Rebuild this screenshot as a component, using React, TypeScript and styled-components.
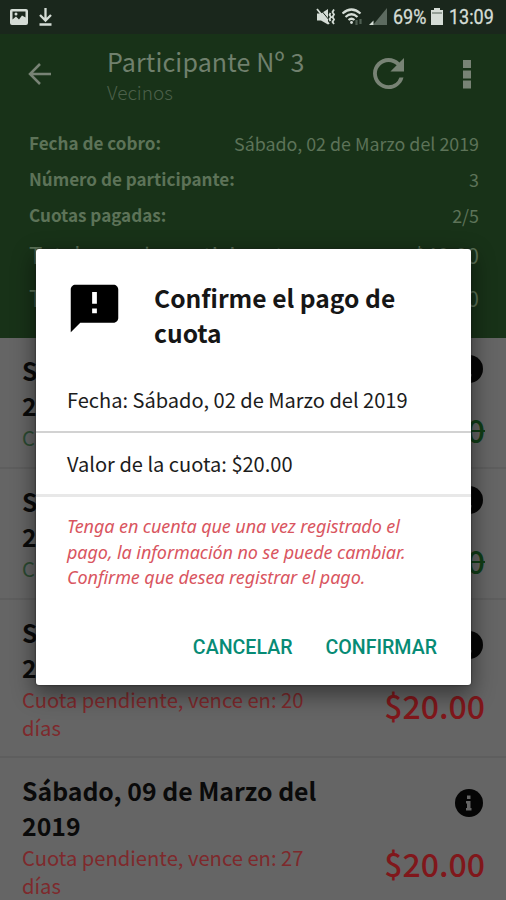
import React from "react";
import styled, { createGlobalStyle } from "styled-components";

const Global = createGlobalStyle`
  *{box-sizing:border-box}
  html,body{margin:0;padding:0;background:#656565}
  body{width:506px;height:900px;overflow:hidden;font-family:"Noto Sans CJK SC","Noto Sans",sans-serif}
`;

const Screen = styled.div`
  position: relative;
  width: 506px;
  height: 900px;
  overflow: hidden;
  background: #656565;
`;

const StatusBar = styled.div`
  height: 34px;
  background: #1a271c;
  display: flex;
  align-items: center;
  justify-content: space-between;
  padding: 0 11px 0 10px;
  color: #d5ddd6;
`;

const StatusGroup = styled.div<{ $gap: number }>`
  display: flex;
  align-items: center;
  gap: ${(p) => p.$gap}px;
  svg { display: block; }
`;

const StatusText = styled.span<{ $w: number }>`
  font-family: Roboto, sans-serif;
  font-size: 20px;
  line-height: 34px;
  width: ${(p) => p.$w}px;
  white-space: nowrap;
  transform: scaleX(0.9);
  transform-origin: left center;
  -webkit-text-stroke: 0.3px currentColor;
`;

const Header = styled.header`
  height: 304px;
  background: #183218;
  color: #70806d;
`;

const Toolbar = styled.div`
  height: 92px;
  display: flex;
  padding: 0 33px 0 28px;
`;

const ToolIcon = styled.div<{ $top: number; $left?: number }>`
  margin-top: ${(p) => p.$top}px;
  margin-left: ${(p) => p.$left || 0}px;
  svg { display: block; }
`;

const Titles = styled.div`
  width: 222px;
  margin-left: 56px;
  padding-top: 10px;
`;

const Title = styled.h1`
  margin: 0;
  font-size: 25px;
  line-height: 34px;
  font-weight: 400;
  letter-spacing: 0.15px;
  white-space: nowrap;
`;

const Subtitle = styled.div`
  font-size: 19px;
  line-height: 28px;
  font-weight: 300;
  color: #4c604a;
`;

const Details = styled.div`
  margin-top: -1px;
`;

const Detail = styled.div<{ $large?: boolean }>`
  display: flex;
  justify-content: space-between;
  padding: 0 27px 0 29px;
  height: ${(p) => (p.$large ? 43 : 36)}px;
  line-height: ${(p) => (p.$large ? 43 : 36)}px;
  font-size: ${(p) => (p.$large ? 21.5 : 17.85)}px;
  color: #5d7358;
  white-space: nowrap;
`;

const Label = styled.span<{ $large?: boolean }>`
  font-weight: ${(p) => (p.$large ? 400 : 700)};
  font-size: ${(p) => (p.$large ? 22.3 : 17.1)}px;
`;

const Card = styled.article<{ $h: number }>`
  height: ${(p) => p.$h}px;
  border-bottom: 2px solid #5e5e5e;
  display: flex;
  justify-content: space-between;
  padding: 15px 21px 0 22px;
`;

const CardText = styled.div`
  width: 320px;
`;

const CardDate = styled.h2`
  margin: 0;
  font-size: 24.8px;
  line-height: 35px;
  font-weight: 700;
  color: #0a0a0a;
`;

const CardState = styled.div<{ $paid?: boolean }>`
  width: 300px;
  padding-top: 1px;
  font-size: 20.2px;
  line-height: 28px;
  color: ${(p) => (p.$paid ? "#2b4a31" : "#7e292c")};
`;

const CardSide = styled.div<{ $paid?: boolean }>`
  display: flex;
  flex-direction: column;
  align-items: flex-end;
  padding-top: ${(p) => (p.$paid ? 2 : 16)}px;
  svg { display: block; margin-right: 2px; }
`;

const Amount = styled.div<{ $paid?: boolean }>`
  margin-top: 26px;
  font-size: 32px;
  line-height: 40px;
  font-weight: 500;
  color: ${(p) => (p.$paid ? "#103d16" : "#80171b")};
  text-decoration: ${(p) => (p.$paid ? "line-through" : "none")};
  text-decoration-thickness: 2px;
`;

const Dialog = styled.section`
  position: absolute;
  left: 36px;
  top: 249px;
  width: 435px;
  height: 436px;
  border-radius: 3px;
  background: #fff;
  box-shadow: 0 8px 22px 2px rgba(0, 0, 0, 0.45), 0 0 2px #222;
`;

const DialogHead = styled.div`
  display: flex;
  height: 120px;
  padding: 31px 0 0 30px;
`;

const DialogTitle = styled.h2`
  margin: 0 0 0 31px;
  width: 260px;
  font-size: 24.6px;
  line-height: 35px;
  font-weight: 700;
  color: #161616;
`;

const DialogRow = styled.div<{ $last?: boolean }>`
  height: 64px;
  padding-left: 31px;
  line-height: 62px;
  font-size: 20.05px;
  color: #1c1c1c;
  white-space: nowrap;
  border-bottom: ${(p) => (p.$last ? "3px solid #e8e8e8" : "2px solid #d2d2d2")};
`;

const Warning = styled.p`
  margin: 17px 0 0 31px;
  font-family: "Noto Sans", sans-serif;
  font-style: italic;
  font-size: 18px;
  line-height: 25.5px;
  letter-spacing: -0.08px;
  color: #d95560;
  white-space: nowrap;
`;

const Actions = styled.div`
  display: flex;
  justify-content: flex-end;
  gap: 33px;
  padding: 34px 34px 0 0;
`;

const Action = styled.button`
  border: 0;
  padding: 0;
  background: none;
  font: 500 19.6px/46px Roboto, sans-serif;
  color: #078b75;
`;

const InfoIcon = () => (
  <svg width="28" height="28" viewBox="0 0 28 28">
    <circle cx="14" cy="14" r="14" fill="#050505" />
    <path d="M12 6.500h3.500v3.500H12zM11 12h4.500v7h1v2.500H11V19h1v-4.500h-1z" fill="#656565" />
  </svg>
);

const payments = [
  { h: 131, paid: true, date: "Sábado, 16 de Febrero del 2019", state: "Cuota pagada" },
  { h: 131, paid: true, date: "Sábado, 23 de Febrero del 2019", state: "Cuota pagada" },
  { h: 158, paid: false, date: "Sábado, 02 de Marzo del 2019", state: "Cuota pendiente, vence en: 20 días" },
  { h: 159, paid: false, date: "Sábado, 09 de Marzo del 2019", state: "Cuota pendiente, vence en: 27 días" },
];

export default function App() {
  return (
    <Screen>
      <Global />
      <StatusBar>
        <StatusGroup $gap={11}>
          <svg width="18" height="18" viewBox="0 0 18 18">
            <path fillRule="evenodd" fill="currentColor" d="M2 1h14q2 0 2 2v12q0 2-2 2H2q-2 0-2-2V3q0-2 2-2zM2.500 3.500v8l3.500-3 3 3 3-4 3.500 2V3.500zM6 4.500a1.500 1.500 0 1 1 0 3 1.500 1.500 0 0 1 0-3z" />
          </svg>
          <svg width="13" height="18" viewBox="0 0 13 18" fill="none" stroke="currentColor" strokeWidth="2.300">
            <path d="M6.500 0v12M1 7l5.500 5.500L12 7M.5 16.500h12" />
          </svg>
        </StatusGroup>
        <StatusGroup $gap={6}>
          <svg width="20" height="18" viewBox="0 0 20 18">
            <path fill="currentColor" d="M1 5.500h4L12 1v15.500L5 12.500H1z" />
            <path stroke="#1a271c" strokeWidth="1" d="M4 1l10 12" />
            <path stroke="currentColor" strokeWidth="1.800" fill="none" d="M1 1l12 15" />
            <path stroke="currentColor" strokeWidth="1.800" fill="none" d="M14.500 5l-1 2 1.500 2-1.500 2 1 2M18 1.500l-1.500 2.500 1.500 2.500-1.500 2.500 1.500 2.500-1.500 2.500 1.500 2" />
          </svg>
          <svg width="21" height="18" viewBox="0 0 21 18" fill="none" stroke="currentColor" strokeWidth="2.200">
            <path d="M.5 5.500q9-8 18 0M3.500 9q6-5.500 12 0M6.500 12q3-2.500 6 0" />
            <circle cx="9.500" cy="14.500" r="1.400" fill="currentColor" stroke="none" />
            <path d="M14.500 12v5M18.500 11v5" stroke="#4f5f52" />
          </svg>
          <svg width="18" height="18" viewBox="0 0 18 18">
            <path d="M18 0v17H4z" fill="#5d6b60" />
            <path d="M4.500 12.500V17H0z" fill="currentColor" />
          </svg>
          <StatusText $w={32}>69%</StatusText>
          <svg width="12" height="18" viewBox="0 0 12 18">
            <path d="M3 0h6v2h3v15H0V2h3z" fill="currentColor" />
            <path d="M1 5h10" stroke="#7d897f" strokeWidth="1.500" />
          </svg>
          <StatusText $w={46}>13:09</StatusText>
        </StatusGroup>
      </StatusBar>
      <Header>
        <Toolbar>
          <ToolIcon $top={29}>
            <svg width="23" height="22" viewBox="0 0 23 22" fill="none" stroke="#788375" strokeWidth="2.500">
              <path d="M23 11H2M12 1L2 11l10 10" />
            </svg>
          </ToolIcon>
          <Titles>
            <Title>Participante Nº 3</Title>
            <Subtitle>Vecinos</Subtitle>
          </Titles>
          <ToolIcon $top={24} $left={44}>
            <svg width="31" height="31" viewBox="4 4 16 16" fill="#788375">
              <path d="M17.650 6.350A7.958 7.958 0 0 0 12 4c-4.420 0-7.990 3.580-7.990 8s3.570 8 7.990 8c3.730 0 6.840-2.550 7.730-6h-2.080A5.990 5.990 0 0 1 12 18c-3.310 0-6-2.690-6-6s2.690-6 6-6c1.660 0 3.140.690 4.220 1.780L13 11h7V4z" />
            </svg>
          </ToolIcon>
          <ToolIcon $top={26} $left={59}>
            <svg width="9" height="29" viewBox="0 0 9 29" fill="#788375">
              <path d="M0 0h8v8H0zM0 10.500h8v8H0zM0 20.500h8v8H0z" />
            </svg>
          </ToolIcon>
        </Toolbar>
        <Details>
          <Detail><Label>Fecha de cobro:</Label><span>Sábado, 02 de Marzo del 2019</span></Detail>
          <Detail><Label>Número de participante:</Label><span>3</span></Detail>
          <Detail><Label>Cuotas pagadas:</Label><span>2/5</span></Detail>
          <Detail $large><Label $large>Total pagado participante:</Label><span>$40.00</span></Detail>
          <Detail $large><Label $large>Total por pagar:</Label><span>$60.00</span></Detail>
        </Details>
      </Header>
      <main>
        {payments.map((p) => (
          <Card key={p.date} $h={p.h}>
            <CardText>
              <CardDate>{p.date}</CardDate>
              <CardState $paid={p.paid}>{p.state}</CardState>
            </CardText>
            <CardSide $paid={p.paid}>
              <InfoIcon />
              <Amount $paid={p.paid}>$20.00</Amount>
            </CardSide>
          </Card>
        ))}
      </main>
      <Dialog>
        <DialogHead>
          <svg width="57" height="57" viewBox="0 0 24 24">
            <path d="M20 2H4c-1.100 0-2 .9-2 2v18l4-4h14c1.100 0 2-.9 2-2V4c0-1.100-.9-2-2-2zm-7 12h-2v-2h2zm0-4h-2V5h2z" />
          </svg>
          <DialogTitle>Confirme el pago de cuota</DialogTitle>
        </DialogHead>
        <DialogRow>Fecha: Sábado, 02 de Marzo del 2019</DialogRow>
        <DialogRow $last>Valor de la cuota: $20.00</DialogRow>
        <Warning>
          Tenga en cuenta que una vez registrado el<br />
          pago, la información no se puede cambiar.<br />
          Confirme que desea registrar el pago.
        </Warning>
        <Actions>
          <Action>CANCELAR</Action>
          <Action>CONFIRMAR</Action>
        </Actions>
      </Dialog>
    </Screen>
  );
}
